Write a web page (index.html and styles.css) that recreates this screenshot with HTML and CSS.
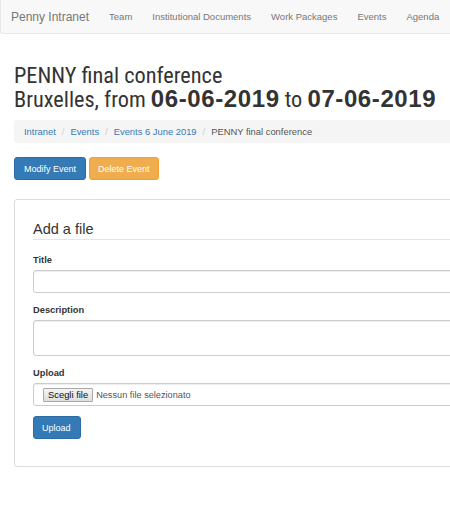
FILE: index.html
```html
<!DOCTYPE html>
<html lang="it">
<head>
<meta charset="utf-8">
<title>PENNY final conference</title>
<link rel="stylesheet" href="styles.css">
</head>
<body>
<div class="page">
  <nav class="navbar">
    <a class="brand" href="#">Penny Intranet</a>
    <ul class="nav">
      <li><a href="#">Team</a></li>
      <li><a href="#">Institutional Documents</a></li>
      <li><a href="#">Work Packages</a></li>
      <li><a href="#">Events</a></li>
      <li><a href="#">Agenda</a></li>
    </ul>
  </nav>
  <main class="container">
    <h1 class="title">PENNY final conference<br>Bruxelles, from <b>06-06-2019</b> to <b>07-06-2019</b></h1>
    <ol class="breadcrumb">
      <li><a href="#">Intranet</a></li>
      <li class="sep">/</li>
      <li><a href="#">Events</a></li>
      <li class="sep">/</li>
      <li><a href="#">Events 6 June 2019</a></li>
      <li class="sep">/</li>
      <li class="active">PENNY final conference</li>
    </ol>
    <div class="actions">
      <a class="btn btn-primary" href="#">Modify Event</a>
      <a class="btn btn-warning" href="#">Delete Event</a>
    </div>
    <section class="panel">
      <form class="form">
        <div class="legend">Add a file</div>
        <div class="group">
          <label class="label">Title</label>
          <div class="input"></div>
        </div>
        <div class="group">
          <label class="label">Description</label>
          <div class="input textarea"></div>
        </div>
        <div class="group">
          <label class="label">Upload</label>
          <div class="input file">
            <span class="file-btn">Scegli file</span>
            <span class="file-text">Nessun file selezionato</span>
          </div>
        </div>
        <div class="group">
          <span class="btn btn-primary btn-upload">Upload</span>
        </div>
      </form>
    </section>
  </main>
</div>
</body>
</html>
```

FILE: styles.css
```css
html, body {
  margin: 0;
  padding: 0;
  overflow: hidden;
  background: #fff;
}
body {
  font-family: "Liberation Sans", Arial, sans-serif;
  color: #333;
  font-size: 9.4px;
}
a { text-decoration: none; }
.page {
  width: 520px;
}
.navbar {
  display: flex;
  align-items: center;
  height: 33px;
  background: #f8f8f8;
  border: 1px solid #e7e7e7;
  border-top: none;
  border-radius: 0 0 3px 3px;
}
.brand {
  font-size: 12px;
  color: #777;
  padding: 0 10px 0 10px;
}
.nav {
  display: flex;
  list-style: none;
  margin: 0;
  padding: 0;
}
.nav a {
  display: block;
  font-size: 9.5px;
  color: #777;
  padding: 0 10px;
}
.container {
  padding: 0 0 0 14px;
}
.title {
  margin: 30px 0 0;
  font-family: "Roboto Condensed", Roboto, "Liberation Sans", sans-serif;
  font-stretch: condensed;
  font-size: 22.3px;
  line-height: 23px;
  font-weight: normal;
  color: #333;
}
.title b {
  font-family: "Liberation Sans", Arial, sans-serif;
  font-stretch: normal;
  font-weight: bold;
  font-size: 24px;
  letter-spacing: 0.6px;
}
.breadcrumb {
  display: flex;
  align-items: center;
  list-style: none;
  margin: 9px 0 0;
  padding: 0 10px;
  height: 23px;
  background: #f5f5f5;
  border-radius: 3px;
  font-size: 9.4px;
}
.breadcrumb a { color: #337ab7; }
.breadcrumb .sep {
  color: #ccc;
  padding: 0 6px;
}
.breadcrumb .active { color: #555; }
.actions {
  display: flex;
  gap: 3px;
  margin-top: 14px;
}
.btn {
  display: inline-flex;
  align-items: center;
  height: 23px;
  box-sizing: border-box;
  padding: 0 9px;
  font-size: 9px;
  color: #fff;
  border-radius: 3px;
  border: 1px solid transparent;
}
.btn-primary {
  background: #337ab7;
  border-color: #2e6da4;
}
.btn-warning {
  background: #f0ad4e;
  border-color: #eea236;
  padding: 0 8px;
}
.panel {
  margin-top: 19px;
  border: 1px solid #ddd;
  border-radius: 3px;
  padding: 19px 0 27px 18px;
  box-shadow: 0 1px 1px rgba(0,0,0,0.05);
}
.legend {
  font-size: 14.5px;
  line-height: 20px;
  color: #333;
  border-bottom: 1px solid #e5e5e5;
  margin-bottom: 13px;
}
.group {
  margin-bottom: 10px;
}
.group:last-child { margin-bottom: 0; }
.label {
  display: block;
  font-weight: bold;
  font-size: 9.3px;
  line-height: 14px;
  margin-bottom: 3px;
}
.input {
  box-sizing: border-box;
  height: 23px;
  border: 1px solid #ccc;
  border-radius: 3px;
  box-shadow: inset 0 1px 1px rgba(0,0,0,0.075);
  background: #fff;
}
.textarea { height: 36px; }
.file {
  display: flex;
  align-items: center;
  padding-left: 9px;
  gap: 3px;
}
.file-btn {
  box-sizing: border-box;
  height: 14px;
  line-height: 12px;
  padding: 0 4px;
  border: 1px solid #a9a9a9;
  border-radius: 1px;
  background: linear-gradient(#f4f4f4, #dedede);
  font-size: 9.4px;
  color: #111;
}
.file-text {
  font-size: 9.2px;
  color: #555;
}
.btn-upload {
  width: 48px;
  padding: 0 8px;
}
```
